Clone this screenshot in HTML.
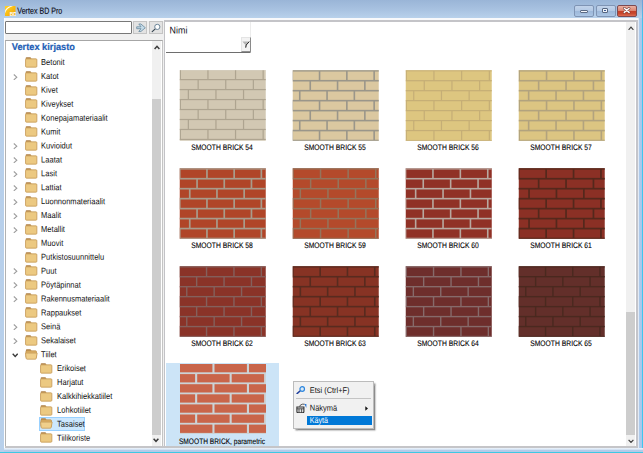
<!DOCTYPE html>
<html><head><meta charset="utf-8"><title>Vertex BD Pro</title>
<style>
html,body{margin:0;padding:0}
body{width:643px;height:453px;overflow:hidden;position:relative;background:#b4cdea;font-family:"Liberation Sans",sans-serif;color:#000}
div,svg,span{position:absolute;box-sizing:border-box}
.t{white-space:nowrap;transform-origin:0 50%;line-height:1}
.lbl{font-size:8px;white-space:nowrap;line-height:1;text-align:center;width:140px;color:#000;transform:matrix(.845,0.001,0,1,0,0);transform-origin:50% 50%;-webkit-text-stroke:.12px #000}
.tile{shape-rendering:auto}
</style></head><body>

<div style="left:0;top:0;width:643px;height:18px;background:linear-gradient(#9ab5d7,#a7c1e0 50%,#b8d1eb)"></div>
<div style="left:0;top:18px;width:4px;height:435px;background:#b8d0eb"></div>
<div style="left:638px;top:18px;width:5px;height:435px;background:linear-gradient(90deg,#e4ecf6 0,#dfe9f6 22%,#aecbec 28%,#a8c6ec 76%,#3ec6ee 82%)"></div>
<div style="left:641.8px;top:0;width:1.2px;height:24px;background:linear-gradient(#6f9fd6,#3ec6ee)"></div>
<div style="left:0;top:447.7px;width:643px;height:5.3px;background:linear-gradient(#e8f0f9 0,#e2ecf8 28%,#b4cdea 34%,#b6cae8 70%,#c6c8e2 78%,#3ec8e4 84%)"></div>
<div style="left:0;top:447.7px;width:3.7px;height:4px;background:#b8d0eb"></div>
<div style="left:3.7px;top:17.8px;width:634.6px;height:430px;background:#f0f0f0"></div>
<div style="left:3.7px;top:17.8px;width:634.6px;height:3.4px;background:#f8f9fb"></div>
<div style="left:636.2px;top:19.6px;width:2.2px;height:428.2px;background:#c4c5cb"></div>
<div style="left:4.8px;top:446px;width:633px;height:1.8px;background:#c5c5c8"></div>
<div style="left:3.7px;top:17.8px;width:1.2px;height:430px;background:#fff"></div>
<svg style="left:5px;top:5.5px" width="10.5" height="10.5" viewBox="0 0 21 21"><defs><linearGradient id="ig" x1="0" y1="0" x2="1" y2="1"><stop offset="0" stop-color="#ffd428"/><stop offset="1" stop-color="#f2a200"/></linearGradient></defs><rect width="21" height="21" fill="url(#ig)"/><path d="M0 15 Q3 3.5 16 0 L11.5 0 Q2 3 0 9.5 Z" fill="#fff" opacity=".92"/><text x="9.5" y="20" font-size="10" font-weight="bold" font-family="Liberation Sans, sans-serif" fill="#fff">BD</text></svg>
<span class="t" style="left:17px;top:6px;font-size:8.9px;transform:matrix(0.8,0.001,0,1,0.30,0.72);color:#0a0a14;-webkit-text-stroke:.12px #0a0a14">Vertex BD Pro</span>
<div style="left:574px;top:5px;width:19.5px;height:11.5px;border:1px solid #7f94b4;border-radius:2px;background:linear-gradient(#c2d3ea 0,#b3c9e5 48%,#9db8da 52%,#abc5e3)"></div>
<div style="left:580px;top:10px;width:7.5px;height:3px;background:#f4f6fa;border:.7px solid #5a6a84;border-radius:1px"></div>
<div style="left:596px;top:5px;width:19.5px;height:11.5px;border:1px solid #7f94b4;border-radius:2px;background:linear-gradient(#c2d3ea 0,#b3c9e5 48%,#9db8da 52%,#abc5e3)"></div>
<div style="left:602.1px;top:7.9px;width:6.2px;height:5.2px;background:#eef2f8;border:.8px solid #55657f;border-radius:1px"></div>
<div style="left:603.9px;top:9.7px;width:2.6px;height:1.6px;background:#3c5a96"></div>
<div style="left:617px;top:5px;width:20px;height:11.5px;border:1px solid #7d4a50;border-radius:2px;background:linear-gradient(#eab0a2 0,#dc8672 46%,#c4402a 54%,#c8482e 75%,#dc6c54)"></div>
<svg style="left:623.3px;top:7.4px" width="7.4" height="6.6" viewBox="0 0 7.4 6.6"><path d="M1.3 1.2 L6.1 5.4 M6.1 1.2 L1.3 5.4" stroke="#6a3430" stroke-width="2.5" stroke-linecap="round"/><path d="M1.3 1.2 L6.1 5.4 M6.1 1.2 L1.3 5.4" stroke="#fff" stroke-width="1.5" stroke-linecap="round"/></svg>
<div style="left:5px;top:21.2px;width:127px;height:12.6px;background:#fff;border:1px solid #787878;border-radius:1px"></div>
<div style="left:133.4px;top:21.2px;width:13.5px;height:12.6px;background:#e3e3e3;border:1px solid #c4c4c4"></div>
<div style="left:148.9px;top:21.2px;width:13.7px;height:12.6px;background:#e3e3e3;border:1px solid #c4c4c4"></div>
<svg style="left:135.5px;top:23px" width="11" height="10" viewBox="0 0 11 10"><path d="M0.7 3.8 H5 L2.8 1 H4.9 L9.3 4.75 L4.9 8.5 H2.8 L5 5.7 H0.7 Z" fill="#c6dcea" stroke="#6c8ca0" stroke-width="0.85" stroke-linejoin="round"/></svg>
<svg style="left:150.5px;top:22.5px" width="10.5" height="10" viewBox="0 0 10.5 10"><path d="M1.2 8.7 L4.3 5.8" stroke="#36444f" stroke-width="1.15" stroke-linecap="round"/><circle cx="6.3" cy="3.9" r="2.6" fill="#fff" stroke="#6a8498" stroke-width="1"/></svg>
<div class="tree" style="left:5px;top:40px;width:158.2px;height:406px;background:#fff;border:1px solid #a6a6a6;border-left-color:#b2b2b2;border-right:1.2px solid #c4c4c4;border-bottom:none;overflow:hidden">
<span class="t" style="left:5px;top:0px;font-size:9.7px;transform:matrix(0.953,0.001,0,1,0.80,0.94);color:#1d5eb6;font-weight:bold;-webkit-text-stroke:.2px #1d5eb6">Vertex kirjasto</span>
<svg class="fold" style="left:18.6px;top:15.70px" width="13" height="11" viewBox="0 0 13 11"><path d="M0.7 2.3 L0.7 1.1 Q0.7 0.3 1.7 0.3 L5 0.3 Q5.9 0.3 6.2 1.2 L6.6 2.3 Z" fill="#ad7f45"/><rect x="0.55" y="1.85" width="11.3" height="8.3" rx="0.9" fill="#ecc981" stroke="#c69c5a" stroke-width="0.85"/></svg>
<span class="t" style="left:35px;top:16px;font-size:8.6px;transform:matrix(0.875,0.001,0,1,0.10,0.97);color:#111;">Betonit</span>
<svg style="left:7px;top:32.62px" width="5" height="6.4" viewBox="0 0 5 6.4"><path d="M0.8 0.5 L3.8 3.2 L0.8 5.9" fill="none" stroke="#9c9c9c" stroke-width="1.1"/></svg>
<svg class="fold" style="left:18.6px;top:29.62px" width="13" height="11" viewBox="0 0 13 11"><path d="M0.7 2.3 L0.7 1.1 Q0.7 0.3 1.7 0.3 L5 0.3 Q5.9 0.3 6.2 1.2 L6.6 2.3 Z" fill="#ad7f45"/><rect x="0.55" y="1.85" width="11.3" height="8.3" rx="0.9" fill="#ecc981" stroke="#c69c5a" stroke-width="0.85"/></svg>
<span class="t" style="left:35px;top:30px;font-size:8.6px;transform:matrix(0.875,0.001,0,1,0.10,0.89);color:#111;">Katot</span>
<svg class="fold" style="left:18.6px;top:43.53px" width="13" height="11" viewBox="0 0 13 11"><path d="M0.7 2.3 L0.7 1.1 Q0.7 0.3 1.7 0.3 L5 0.3 Q5.9 0.3 6.2 1.2 L6.6 2.3 Z" fill="#ad7f45"/><rect x="0.55" y="1.85" width="11.3" height="8.3" rx="0.9" fill="#ecc981" stroke="#c69c5a" stroke-width="0.85"/></svg>
<span class="t" style="left:35px;top:44px;font-size:8.6px;transform:matrix(0.875,0.001,0,1,0.10,0.80);color:#111;">Kivet</span>
<svg class="fold" style="left:18.6px;top:57.44px" width="13" height="11" viewBox="0 0 13 11"><path d="M0.7 2.3 L0.7 1.1 Q0.7 0.3 1.7 0.3 L5 0.3 Q5.9 0.3 6.2 1.2 L6.6 2.3 Z" fill="#ad7f45"/><rect x="0.55" y="1.85" width="11.3" height="8.3" rx="0.9" fill="#ecc981" stroke="#c69c5a" stroke-width="0.85"/></svg>
<span class="t" style="left:35px;top:58px;font-size:8.6px;transform:matrix(0.875,0.001,0,1,0.10,0.72);color:#111;">Kiveykset</span>
<svg class="fold" style="left:18.6px;top:71.36px" width="13" height="11" viewBox="0 0 13 11"><path d="M0.7 2.3 L0.7 1.1 Q0.7 0.3 1.7 0.3 L5 0.3 Q5.9 0.3 6.2 1.2 L6.6 2.3 Z" fill="#ad7f45"/><rect x="0.55" y="1.85" width="11.3" height="8.3" rx="0.9" fill="#ecc981" stroke="#c69c5a" stroke-width="0.85"/></svg>
<span class="t" style="left:35px;top:72px;font-size:8.6px;transform:matrix(0.875,0.001,0,1,0.10,0.63);color:#111;">Konepajamateriaalit</span>
<svg class="fold" style="left:18.6px;top:85.28px" width="13" height="11" viewBox="0 0 13 11"><path d="M0.7 2.3 L0.7 1.1 Q0.7 0.3 1.7 0.3 L5 0.3 Q5.9 0.3 6.2 1.2 L6.6 2.3 Z" fill="#ad7f45"/><rect x="0.55" y="1.85" width="11.3" height="8.3" rx="0.9" fill="#ecc981" stroke="#c69c5a" stroke-width="0.85"/></svg>
<span class="t" style="left:35px;top:86px;font-size:8.6px;transform:matrix(0.875,0.001,0,1,0.10,0.55);color:#111;">Kumit</span>
<svg style="left:7px;top:102.19px" width="5" height="6.4" viewBox="0 0 5 6.4"><path d="M0.8 0.5 L3.8 3.2 L0.8 5.9" fill="none" stroke="#9c9c9c" stroke-width="1.1"/></svg>
<svg class="fold" style="left:18.6px;top:99.19px" width="13" height="11" viewBox="0 0 13 11"><path d="M0.7 2.3 L0.7 1.1 Q0.7 0.3 1.7 0.3 L5 0.3 Q5.9 0.3 6.2 1.2 L6.6 2.3 Z" fill="#ad7f45"/><rect x="0.55" y="1.85" width="11.3" height="8.3" rx="0.9" fill="#ecc981" stroke="#c69c5a" stroke-width="0.85"/></svg>
<span class="t" style="left:35px;top:100px;font-size:8.6px;transform:matrix(0.875,0.001,0,1,0.10,0.46);color:#111;">Kuvioidut</span>
<svg style="left:7px;top:116.10px" width="5" height="6.4" viewBox="0 0 5 6.4"><path d="M0.8 0.5 L3.8 3.2 L0.8 5.9" fill="none" stroke="#9c9c9c" stroke-width="1.1"/></svg>
<svg class="fold" style="left:18.6px;top:113.10px" width="13" height="11" viewBox="0 0 13 11"><path d="M0.7 2.3 L0.7 1.1 Q0.7 0.3 1.7 0.3 L5 0.3 Q5.9 0.3 6.2 1.2 L6.6 2.3 Z" fill="#ad7f45"/><rect x="0.55" y="1.85" width="11.3" height="8.3" rx="0.9" fill="#ecc981" stroke="#c69c5a" stroke-width="0.85"/></svg>
<span class="t" style="left:35px;top:114px;font-size:8.6px;transform:matrix(0.875,0.001,0,1,0.10,0.38);color:#111;">Laatat</span>
<svg style="left:7px;top:130.02px" width="5" height="6.4" viewBox="0 0 5 6.4"><path d="M0.8 0.5 L3.8 3.2 L0.8 5.9" fill="none" stroke="#9c9c9c" stroke-width="1.1"/></svg>
<svg class="fold" style="left:18.6px;top:127.02px" width="13" height="11" viewBox="0 0 13 11"><path d="M0.7 2.3 L0.7 1.1 Q0.7 0.3 1.7 0.3 L5 0.3 Q5.9 0.3 6.2 1.2 L6.6 2.3 Z" fill="#ad7f45"/><rect x="0.55" y="1.85" width="11.3" height="8.3" rx="0.9" fill="#ecc981" stroke="#c69c5a" stroke-width="0.85"/></svg>
<span class="t" style="left:35px;top:128px;font-size:8.6px;transform:matrix(0.875,0.001,0,1,0.10,0.29);color:#111;">Lasit</span>
<svg style="left:7px;top:143.93px" width="5" height="6.4" viewBox="0 0 5 6.4"><path d="M0.8 0.5 L3.8 3.2 L0.8 5.9" fill="none" stroke="#9c9c9c" stroke-width="1.1"/></svg>
<svg class="fold" style="left:18.6px;top:140.93px" width="13" height="11" viewBox="0 0 13 11"><path d="M0.7 2.3 L0.7 1.1 Q0.7 0.3 1.7 0.3 L5 0.3 Q5.9 0.3 6.2 1.2 L6.6 2.3 Z" fill="#ad7f45"/><rect x="0.55" y="1.85" width="11.3" height="8.3" rx="0.9" fill="#ecc981" stroke="#c69c5a" stroke-width="0.85"/></svg>
<span class="t" style="left:35px;top:142px;font-size:8.6px;transform:matrix(0.875,0.001,0,1,0.10,0.21);color:#111;">Lattiat</span>
<svg style="left:7px;top:157.85px" width="5" height="6.4" viewBox="0 0 5 6.4"><path d="M0.8 0.5 L3.8 3.2 L0.8 5.9" fill="none" stroke="#9c9c9c" stroke-width="1.1"/></svg>
<svg class="fold" style="left:18.6px;top:154.85px" width="13" height="11" viewBox="0 0 13 11"><path d="M0.7 2.3 L0.7 1.1 Q0.7 0.3 1.7 0.3 L5 0.3 Q5.9 0.3 6.2 1.2 L6.6 2.3 Z" fill="#ad7f45"/><rect x="0.55" y="1.85" width="11.3" height="8.3" rx="0.9" fill="#ecc981" stroke="#c69c5a" stroke-width="0.85"/></svg>
<span class="t" style="left:35px;top:156px;font-size:8.6px;transform:matrix(0.875,0.001,0,1,0.10,0.12);color:#111;">Luonnonmateriaalit</span>
<svg style="left:7px;top:171.77px" width="5" height="6.4" viewBox="0 0 5 6.4"><path d="M0.8 0.5 L3.8 3.2 L0.8 5.9" fill="none" stroke="#9c9c9c" stroke-width="1.1"/></svg>
<svg class="fold" style="left:18.6px;top:168.77px" width="13" height="11" viewBox="0 0 13 11"><path d="M0.7 2.3 L0.7 1.1 Q0.7 0.3 1.7 0.3 L5 0.3 Q5.9 0.3 6.2 1.2 L6.6 2.3 Z" fill="#ad7f45"/><rect x="0.55" y="1.85" width="11.3" height="8.3" rx="0.9" fill="#ecc981" stroke="#c69c5a" stroke-width="0.85"/></svg>
<span class="t" style="left:35px;top:170px;font-size:8.6px;transform:matrix(0.875,0.001,0,1,0.10,0.04);color:#111;">Maalit</span>
<svg style="left:7px;top:185.68px" width="5" height="6.4" viewBox="0 0 5 6.4"><path d="M0.8 0.5 L3.8 3.2 L0.8 5.9" fill="none" stroke="#9c9c9c" stroke-width="1.1"/></svg>
<svg class="fold" style="left:18.6px;top:182.68px" width="13" height="11" viewBox="0 0 13 11"><path d="M0.7 2.3 L0.7 1.1 Q0.7 0.3 1.7 0.3 L5 0.3 Q5.9 0.3 6.2 1.2 L6.6 2.3 Z" fill="#ad7f45"/><rect x="0.55" y="1.85" width="11.3" height="8.3" rx="0.9" fill="#ecc981" stroke="#c69c5a" stroke-width="0.85"/></svg>
<span class="t" style="left:35px;top:183px;font-size:8.6px;transform:matrix(0.875,0.001,0,1,0.10,0.95);color:#111;">Metallit</span>
<svg class="fold" style="left:18.6px;top:196.59px" width="13" height="11" viewBox="0 0 13 11"><path d="M0.7 2.3 L0.7 1.1 Q0.7 0.3 1.7 0.3 L5 0.3 Q5.9 0.3 6.2 1.2 L6.6 2.3 Z" fill="#ad7f45"/><rect x="0.55" y="1.85" width="11.3" height="8.3" rx="0.9" fill="#ecc981" stroke="#c69c5a" stroke-width="0.85"/></svg>
<span class="t" style="left:35px;top:197px;font-size:8.6px;transform:matrix(0.875,0.001,0,1,0.10,0.87);color:#111;">Muovit</span>
<svg class="fold" style="left:18.6px;top:210.51px" width="13" height="11" viewBox="0 0 13 11"><path d="M0.7 2.3 L0.7 1.1 Q0.7 0.3 1.7 0.3 L5 0.3 Q5.9 0.3 6.2 1.2 L6.6 2.3 Z" fill="#ad7f45"/><rect x="0.55" y="1.85" width="11.3" height="8.3" rx="0.9" fill="#ecc981" stroke="#c69c5a" stroke-width="0.85"/></svg>
<span class="t" style="left:35px;top:211px;font-size:8.6px;transform:matrix(0.875,0.001,0,1,0.10,0.78);color:#111;">Putkistosuunnittelu</span>
<svg style="left:7px;top:227.42px" width="5" height="6.4" viewBox="0 0 5 6.4"><path d="M0.8 0.5 L3.8 3.2 L0.8 5.9" fill="none" stroke="#9c9c9c" stroke-width="1.1"/></svg>
<svg class="fold" style="left:18.6px;top:224.42px" width="13" height="11" viewBox="0 0 13 11"><path d="M0.7 2.3 L0.7 1.1 Q0.7 0.3 1.7 0.3 L5 0.3 Q5.9 0.3 6.2 1.2 L6.6 2.3 Z" fill="#ad7f45"/><rect x="0.55" y="1.85" width="11.3" height="8.3" rx="0.9" fill="#ecc981" stroke="#c69c5a" stroke-width="0.85"/></svg>
<span class="t" style="left:35px;top:225px;font-size:8.6px;transform:matrix(0.875,0.001,0,1,0.10,0.70);color:#111;">Puut</span>
<svg style="left:7px;top:241.34px" width="5" height="6.4" viewBox="0 0 5 6.4"><path d="M0.8 0.5 L3.8 3.2 L0.8 5.9" fill="none" stroke="#9c9c9c" stroke-width="1.1"/></svg>
<svg class="fold" style="left:18.6px;top:238.34px" width="13" height="11" viewBox="0 0 13 11"><path d="M0.7 2.3 L0.7 1.1 Q0.7 0.3 1.7 0.3 L5 0.3 Q5.9 0.3 6.2 1.2 L6.6 2.3 Z" fill="#ad7f45"/><rect x="0.55" y="1.85" width="11.3" height="8.3" rx="0.9" fill="#ecc981" stroke="#c69c5a" stroke-width="0.85"/></svg>
<span class="t" style="left:35px;top:239px;font-size:8.6px;transform:matrix(0.875,0.001,0,1,0.10,0.61);color:#111;">Pöytäpinnat</span>
<svg style="left:7px;top:255.25px" width="5" height="6.4" viewBox="0 0 5 6.4"><path d="M0.8 0.5 L3.8 3.2 L0.8 5.9" fill="none" stroke="#9c9c9c" stroke-width="1.1"/></svg>
<svg class="fold" style="left:18.6px;top:252.25px" width="13" height="11" viewBox="0 0 13 11"><path d="M0.7 2.3 L0.7 1.1 Q0.7 0.3 1.7 0.3 L5 0.3 Q5.9 0.3 6.2 1.2 L6.6 2.3 Z" fill="#ad7f45"/><rect x="0.55" y="1.85" width="11.3" height="8.3" rx="0.9" fill="#ecc981" stroke="#c69c5a" stroke-width="0.85"/></svg>
<span class="t" style="left:35px;top:253px;font-size:8.6px;transform:matrix(0.875,0.001,0,1,0.10,0.53);color:#111;">Rakennusmateriaalit</span>
<svg class="fold" style="left:18.6px;top:266.17px" width="13" height="11" viewBox="0 0 13 11"><path d="M0.7 2.3 L0.7 1.1 Q0.7 0.3 1.7 0.3 L5 0.3 Q5.9 0.3 6.2 1.2 L6.6 2.3 Z" fill="#ad7f45"/><rect x="0.55" y="1.85" width="11.3" height="8.3" rx="0.9" fill="#ecc981" stroke="#c69c5a" stroke-width="0.85"/></svg>
<span class="t" style="left:35px;top:267px;font-size:8.6px;transform:matrix(0.875,0.001,0,1,0.10,0.44);color:#111;">Rappaukset</span>
<svg style="left:7px;top:283.08px" width="5" height="6.4" viewBox="0 0 5 6.4"><path d="M0.8 0.5 L3.8 3.2 L0.8 5.9" fill="none" stroke="#9c9c9c" stroke-width="1.1"/></svg>
<svg class="fold" style="left:18.6px;top:280.08px" width="13" height="11" viewBox="0 0 13 11"><path d="M0.7 2.3 L0.7 1.1 Q0.7 0.3 1.7 0.3 L5 0.3 Q5.9 0.3 6.2 1.2 L6.6 2.3 Z" fill="#ad7f45"/><rect x="0.55" y="1.85" width="11.3" height="8.3" rx="0.9" fill="#ecc981" stroke="#c69c5a" stroke-width="0.85"/></svg>
<span class="t" style="left:35px;top:281px;font-size:8.6px;transform:matrix(0.875,0.001,0,1,0.10,0.36);color:#111;">Seinä</span>
<svg style="left:7px;top:297.00px" width="5" height="6.4" viewBox="0 0 5 6.4"><path d="M0.8 0.5 L3.8 3.2 L0.8 5.9" fill="none" stroke="#9c9c9c" stroke-width="1.1"/></svg>
<svg class="fold" style="left:18.6px;top:294.00px" width="13" height="11" viewBox="0 0 13 11"><path d="M0.7 2.3 L0.7 1.1 Q0.7 0.3 1.7 0.3 L5 0.3 Q5.9 0.3 6.2 1.2 L6.6 2.3 Z" fill="#ad7f45"/><rect x="0.55" y="1.85" width="11.3" height="8.3" rx="0.9" fill="#ecc981" stroke="#c69c5a" stroke-width="0.85"/></svg>
<span class="t" style="left:35px;top:295px;font-size:8.6px;transform:matrix(0.875,0.001,0,1,0.10,0.27);color:#111;">Sekalaiset</span>
<svg style="left:6px;top:311.51px" width="6.4" height="5" viewBox="0 0 6.4 5"><path d="M0.7 0.8 L3.2 3.5 L5.7 0.8" fill="none" stroke="#383838" stroke-width="1.35"/></svg>
<svg class="fold" style="left:18.6px;top:307.91px" width="13" height="11" viewBox="0 0 13 11"><path d="M0.9 2.3 L0.9 1.1 Q0.9 0.3 1.9 0.3 L5 0.3 Q5.9 0.3 6.2 1.2 L6.6 2.3 Z" fill="#ad7f45"/><rect x="0.9" y="1.85" width="10.6" height="7" rx="0.9" fill="#dcae62" stroke="#c09452" stroke-width="0.8"/><path d="M0.5 4.1 H12.2 L11.2 9.4 Q11.1 10.2 10.3 10.2 H2.1 Q1.3 10.2 1.2 9.4 Z" fill="#f0cf8a" stroke="#c69c5a" stroke-width="0.8" stroke-linejoin="round"/></svg>
<span class="t" style="left:35px;top:309px;font-size:8.6px;transform:matrix(0.875,0.001,0,1,0.10,0.19);color:#111;">Tiilet</span>
<svg class="fold" style="left:34.0px;top:321.83px" width="13" height="11" viewBox="0 0 13 11"><path d="M0.7 2.3 L0.7 1.1 Q0.7 0.3 1.7 0.3 L5 0.3 Q5.9 0.3 6.2 1.2 L6.6 2.3 Z" fill="#ad7f45"/><rect x="0.55" y="1.85" width="11.3" height="8.3" rx="0.9" fill="#ecc981" stroke="#c69c5a" stroke-width="0.85"/></svg>
<span class="t" style="left:51px;top:323px;font-size:8.6px;transform:matrix(0.875,0.001,0,1,0.10,0.10);color:#111;">Erikoiset</span>
<svg class="fold" style="left:34.0px;top:335.74px" width="13" height="11" viewBox="0 0 13 11"><path d="M0.7 2.3 L0.7 1.1 Q0.7 0.3 1.7 0.3 L5 0.3 Q5.9 0.3 6.2 1.2 L6.6 2.3 Z" fill="#ad7f45"/><rect x="0.55" y="1.85" width="11.3" height="8.3" rx="0.9" fill="#ecc981" stroke="#c69c5a" stroke-width="0.85"/></svg>
<span class="t" style="left:51px;top:337px;font-size:8.6px;transform:matrix(0.875,0.001,0,1,0.10,0.02);color:#111;">Harjatut</span>
<svg class="fold" style="left:34.0px;top:349.66px" width="13" height="11" viewBox="0 0 13 11"><path d="M0.7 2.3 L0.7 1.1 Q0.7 0.3 1.7 0.3 L5 0.3 Q5.9 0.3 6.2 1.2 L6.6 2.3 Z" fill="#ad7f45"/><rect x="0.55" y="1.85" width="11.3" height="8.3" rx="0.9" fill="#ecc981" stroke="#c69c5a" stroke-width="0.85"/></svg>
<span class="t" style="left:51px;top:350px;font-size:8.6px;transform:matrix(0.875,0.001,0,1,0.10,0.93);color:#111;">Kalkkihiekkatiilet</span>
<svg class="fold" style="left:34.0px;top:363.57px" width="13" height="11" viewBox="0 0 13 11"><path d="M0.7 2.3 L0.7 1.1 Q0.7 0.3 1.7 0.3 L5 0.3 Q5.9 0.3 6.2 1.2 L6.6 2.3 Z" fill="#ad7f45"/><rect x="0.55" y="1.85" width="11.3" height="8.3" rx="0.9" fill="#ecc981" stroke="#c69c5a" stroke-width="0.85"/></svg>
<span class="t" style="left:51px;top:364px;font-size:8.6px;transform:matrix(0.875,0.001,0,1,0.10,0.85);color:#111;">Lohkotiilet</span>
<div style="left:32.8px;top:376.09px;width:46.4px;height:13.6px;background:#cce8ff;border:.6px solid #99d1ff"></div>
<svg class="fold" style="left:34.0px;top:377.49px" width="13" height="11" viewBox="0 0 13 11"><path d="M0.9 2.3 L0.9 1.1 Q0.9 0.3 1.9 0.3 L5 0.3 Q5.9 0.3 6.2 1.2 L6.6 2.3 Z" fill="#ad7f45"/><rect x="0.9" y="1.85" width="10.6" height="7" rx="0.9" fill="#dcae62" stroke="#c09452" stroke-width="0.8"/><path d="M0.5 4.1 H12.2 L11.2 9.4 Q11.1 10.2 10.3 10.2 H2.1 Q1.3 10.2 1.2 9.4 Z" fill="#f0cf8a" stroke="#c69c5a" stroke-width="0.8" stroke-linejoin="round"/></svg>
<span class="t" style="left:51px;top:378px;font-size:8.6px;transform:matrix(0.875,0.001,0,1,0.10,0.76);color:#111;">Tasaiset</span>
<svg class="fold" style="left:34.0px;top:391.40px" width="13" height="11" viewBox="0 0 13 11"><path d="M0.7 2.3 L0.7 1.1 Q0.7 0.3 1.7 0.3 L5 0.3 Q5.9 0.3 6.2 1.2 L6.6 2.3 Z" fill="#ad7f45"/><rect x="0.55" y="1.85" width="11.3" height="8.3" rx="0.9" fill="#ecc981" stroke="#c69c5a" stroke-width="0.85"/></svg>
<span class="t" style="left:51px;top:392px;font-size:8.6px;transform:matrix(0.875,0.001,0,1,0.10,0.68);color:#111;">Tiilikoriste</span>
<div style="left:146px;top:0;width:8.8px;height:405px;background:#f0f0f0"></div>
<div style="left:146px;top:57.5px;width:8.8px;height:336.3px;background:#cdcdcd"></div>
<svg style="left:147.8px;top:4.3px" width="6" height="4.5" viewBox="0 0 6 4.5"><path d="M0.6 3.9 L3 1.3 L5.4 3.9" fill="none" stroke="#3a3a3a" stroke-width="1.5"/></svg>
<svg style="left:147.4px;top:397.2px" width="6" height="4.5" viewBox="0 0 6 4.5"><path d="M0.6 0.7 L3 3.3 L5.4 0.7" fill="none" stroke="#3a3a3a" stroke-width="1.5"/></svg>
</div>
<div style="left:164.3px;top:19.7px;width:472px;height:426.3px;background:#fff;border-left:1.5px solid #c2c2c6;border-top:2px solid #c4c4c8"></div>
<div style="left:165.8px;top:21.7px;width:85.7px;height:30.9px;background:#fff;border-bottom:1.2px solid #6e6e6e;border-right:1px solid #ececec"></div>
<div style="left:240.9px;top:37.3px;width:10.6px;height:15.2px;background:#f3f3f3;border-right:1px solid #8a8a8a;border-bottom:1px solid #909090;border-left:.5px solid #e4e4e4;border-top:.5px solid #e4e4e4"></div>
<svg style="left:242.4px;top:41px" width="8" height="7.5" viewBox="0 0 8 7.5"><path d="M0.4 0.5 H7.4 L4.4 3.9 V6.2 L3.4 6.9 V3.9 Z" fill="#b4b4b4"/><path d="M7.3 0.6 L4.2 4 L3.7 6.6" fill="none" stroke="#2c2c2c" stroke-width="1"/></svg>
<span class="t" style="left:169px;top:25px;font-size:9.7px;transform:matrix(0.917,0.001,0,1,0.60,0.44);color:#10101c;">Nimi</span>
<div style="left:165.8px;top:362.5px;width:112.8px;height:83.5px;background:#cce4f7"></div>
<svg class="tile" style="left:179.40px;top:70px" width="88" height="72" viewBox="0 0 88 72">
<clipPath id="c0"><rect x="0.75" y="0.25" width="86" height="70.5"/></clipPath>
<g clip-path="url(#c0)"><g transform="translate(0.75,0.25)">
<rect x="-2" y="-2" width="90" height="74.5" fill="#d2c8b3"/>
<g fill="#aea490" style="filter:blur(0.5px)">
<rect x="-2" y="-1.20" width="90" height="1.2"/>
<rect x="-2" y="8.77" width="90" height="1.2"/>
<rect x="-2" y="18.74" width="90" height="1.2"/>
<rect x="-2" y="28.71" width="90" height="1.2"/>
<rect x="-2" y="38.68" width="90" height="1.2"/>
<rect x="-2" y="48.65" width="90" height="1.2"/>
<rect x="-2" y="58.62" width="90" height="1.2"/>
<rect x="-2" y="68.59" width="90" height="1.2"/>
<rect x="-0.00" y="-0.60" width="1.2" height="9.97"/>
<rect x="27.60" y="-0.60" width="1.2" height="9.97"/>
<rect x="55.20" y="-0.60" width="1.2" height="9.97"/>
<rect x="82.80" y="-0.60" width="1.2" height="9.97"/>
<rect x="17.80" y="9.37" width="1.2" height="9.97"/>
<rect x="45.40" y="9.37" width="1.2" height="9.97"/>
<rect x="73.00" y="9.37" width="1.2" height="9.97"/>
<rect x="8.00" y="19.34" width="1.2" height="9.97"/>
<rect x="35.60" y="19.34" width="1.2" height="9.97"/>
<rect x="63.20" y="19.34" width="1.2" height="9.97"/>
<rect x="-0.00" y="29.31" width="1.2" height="9.97"/>
<rect x="27.60" y="29.31" width="1.2" height="9.97"/>
<rect x="55.20" y="29.31" width="1.2" height="9.97"/>
<rect x="82.80" y="29.31" width="1.2" height="9.97"/>
<rect x="17.80" y="39.28" width="1.2" height="9.97"/>
<rect x="45.40" y="39.28" width="1.2" height="9.97"/>
<rect x="73.00" y="39.28" width="1.2" height="9.97"/>
<rect x="8.00" y="49.25" width="1.2" height="9.97"/>
<rect x="35.60" y="49.25" width="1.2" height="9.97"/>
<rect x="63.20" y="49.25" width="1.2" height="9.97"/>
<rect x="-0.00" y="59.22" width="1.2" height="9.97"/>
<rect x="27.60" y="59.22" width="1.2" height="9.97"/>
<rect x="55.20" y="59.22" width="1.2" height="9.97"/>
<rect x="82.80" y="59.22" width="1.2" height="9.97"/>
</g></g></g></svg>
<div class="lbl" style="left:152px;top:143.73px">SMOOTH BRICK 54</div>
<svg class="tile" style="left:292.40px;top:70px" width="88" height="72" viewBox="0 0 88 72">
<clipPath id="c1"><rect x="0.75" y="0.25" width="86" height="70.5"/></clipPath>
<g clip-path="url(#c1)"><g transform="translate(0.75,0.25)">
<rect x="-2" y="-2" width="90" height="74.5" fill="#dbc8a0"/>
<g fill="#9a968a" style="filter:blur(0.35px)">
<rect x="-2" y="-0.30" width="90" height="1.6"/>
<rect x="-2" y="9.67" width="90" height="1.6"/>
<rect x="-2" y="19.64" width="90" height="1.6"/>
<rect x="-2" y="29.61" width="90" height="1.6"/>
<rect x="-2" y="39.58" width="90" height="1.6"/>
<rect x="-2" y="49.55" width="90" height="1.6"/>
<rect x="-2" y="59.52" width="90" height="1.6"/>
<rect x="-2" y="69.49" width="90" height="1.6"/>
<rect x="-1.30" y="0.50" width="1.6" height="9.97"/>
<rect x="26.00" y="0.50" width="1.6" height="9.97"/>
<rect x="53.30" y="0.50" width="1.6" height="9.97"/>
<rect x="80.60" y="0.50" width="1.6" height="9.97"/>
<rect x="16.70" y="10.47" width="1.6" height="9.97"/>
<rect x="44.00" y="10.47" width="1.6" height="9.97"/>
<rect x="71.30" y="10.47" width="1.6" height="9.97"/>
<rect x="6.20" y="20.44" width="1.6" height="9.97"/>
<rect x="33.50" y="20.44" width="1.6" height="9.97"/>
<rect x="60.80" y="20.44" width="1.6" height="9.97"/>
<rect x="-1.30" y="30.41" width="1.6" height="9.97"/>
<rect x="26.00" y="30.41" width="1.6" height="9.97"/>
<rect x="53.30" y="30.41" width="1.6" height="9.97"/>
<rect x="80.60" y="30.41" width="1.6" height="9.97"/>
<rect x="16.70" y="40.38" width="1.6" height="9.97"/>
<rect x="44.00" y="40.38" width="1.6" height="9.97"/>
<rect x="71.30" y="40.38" width="1.6" height="9.97"/>
<rect x="6.20" y="50.35" width="1.6" height="9.97"/>
<rect x="33.50" y="50.35" width="1.6" height="9.97"/>
<rect x="60.80" y="50.35" width="1.6" height="9.97"/>
<rect x="-1.30" y="60.32" width="1.6" height="9.97"/>
<rect x="26.00" y="60.32" width="1.6" height="9.97"/>
<rect x="53.30" y="60.32" width="1.6" height="9.97"/>
<rect x="80.60" y="60.32" width="1.6" height="9.97"/>
</g></g></g></svg>
<div class="lbl" style="left:265px;top:143.73px">SMOOTH BRICK 55</div>
<svg class="tile" style="left:405.40px;top:70px" width="88" height="72" viewBox="0 0 88 72">
<clipPath id="c2"><rect x="0.75" y="0.25" width="86" height="70.5"/></clipPath>
<g clip-path="url(#c2)"><g transform="translate(0.75,0.25)">
<rect x="-2" y="-2" width="90" height="74.5" fill="#ddc680"/>
<g fill="#c5ae76" style="filter:blur(0.5px)">
<rect x="-2" y="-0.10" width="90" height="1.2"/>
<rect x="-2" y="9.87" width="90" height="1.2"/>
<rect x="-2" y="19.84" width="90" height="1.2"/>
<rect x="-2" y="29.81" width="90" height="1.2"/>
<rect x="-2" y="39.78" width="90" height="1.2"/>
<rect x="-2" y="49.75" width="90" height="1.2"/>
<rect x="-2" y="59.72" width="90" height="1.2"/>
<rect x="-2" y="69.69" width="90" height="1.2"/>
<rect x="-0.10" y="0.50" width="1.2" height="9.97"/>
<rect x="27.60" y="0.50" width="1.2" height="9.97"/>
<rect x="55.30" y="0.50" width="1.2" height="9.97"/>
<rect x="83.00" y="0.50" width="1.2" height="9.97"/>
<rect x="17.90" y="10.47" width="1.2" height="9.97"/>
<rect x="45.60" y="10.47" width="1.2" height="9.97"/>
<rect x="73.30" y="10.47" width="1.2" height="9.97"/>
<rect x="7.40" y="20.44" width="1.2" height="9.97"/>
<rect x="35.10" y="20.44" width="1.2" height="9.97"/>
<rect x="62.80" y="20.44" width="1.2" height="9.97"/>
<rect x="-0.10" y="30.41" width="1.2" height="9.97"/>
<rect x="27.60" y="30.41" width="1.2" height="9.97"/>
<rect x="55.30" y="30.41" width="1.2" height="9.97"/>
<rect x="83.00" y="30.41" width="1.2" height="9.97"/>
<rect x="17.90" y="40.38" width="1.2" height="9.97"/>
<rect x="45.60" y="40.38" width="1.2" height="9.97"/>
<rect x="73.30" y="40.38" width="1.2" height="9.97"/>
<rect x="7.40" y="50.35" width="1.2" height="9.97"/>
<rect x="35.10" y="50.35" width="1.2" height="9.97"/>
<rect x="62.80" y="50.35" width="1.2" height="9.97"/>
<rect x="-0.10" y="60.32" width="1.2" height="9.97"/>
<rect x="27.60" y="60.32" width="1.2" height="9.97"/>
<rect x="55.30" y="60.32" width="1.2" height="9.97"/>
<rect x="83.00" y="60.32" width="1.2" height="9.97"/>
</g></g></g></svg>
<div class="lbl" style="left:378px;top:143.73px">SMOOTH BRICK 56</div>
<svg class="tile" style="left:518.40px;top:70px" width="88" height="72" viewBox="0 0 88 72">
<clipPath id="c3"><rect x="0.75" y="0.25" width="86" height="70.5"/></clipPath>
<g clip-path="url(#c3)"><g transform="translate(0.75,0.25)">
<rect x="-2" y="-2" width="90" height="74.5" fill="#dcc582"/>
<g fill="#b2a37e" style="filter:blur(0.35px)">
<rect x="-2" y="-0.30" width="90" height="1.6"/>
<rect x="-2" y="9.67" width="90" height="1.6"/>
<rect x="-2" y="19.64" width="90" height="1.6"/>
<rect x="-2" y="29.61" width="90" height="1.6"/>
<rect x="-2" y="39.58" width="90" height="1.6"/>
<rect x="-2" y="49.55" width="90" height="1.6"/>
<rect x="-2" y="59.52" width="90" height="1.6"/>
<rect x="-2" y="69.49" width="90" height="1.6"/>
<rect x="-0.40" y="0.50" width="1.6" height="9.97"/>
<rect x="27.00" y="0.50" width="1.6" height="9.97"/>
<rect x="54.40" y="0.50" width="1.6" height="9.97"/>
<rect x="81.80" y="0.50" width="1.6" height="9.97"/>
<rect x="19.10" y="10.47" width="1.6" height="9.97"/>
<rect x="46.50" y="10.47" width="1.6" height="9.97"/>
<rect x="73.90" y="10.47" width="1.6" height="9.97"/>
<rect x="9.10" y="20.44" width="1.6" height="9.97"/>
<rect x="36.50" y="20.44" width="1.6" height="9.97"/>
<rect x="63.90" y="20.44" width="1.6" height="9.97"/>
<rect x="-0.40" y="30.41" width="1.6" height="9.97"/>
<rect x="27.00" y="30.41" width="1.6" height="9.97"/>
<rect x="54.40" y="30.41" width="1.6" height="9.97"/>
<rect x="81.80" y="30.41" width="1.6" height="9.97"/>
<rect x="19.10" y="40.38" width="1.6" height="9.97"/>
<rect x="46.50" y="40.38" width="1.6" height="9.97"/>
<rect x="73.90" y="40.38" width="1.6" height="9.97"/>
<rect x="9.10" y="50.35" width="1.6" height="9.97"/>
<rect x="36.50" y="50.35" width="1.6" height="9.97"/>
<rect x="63.90" y="50.35" width="1.6" height="9.97"/>
<rect x="-0.40" y="60.32" width="1.6" height="9.97"/>
<rect x="27.00" y="60.32" width="1.6" height="9.97"/>
<rect x="54.40" y="60.32" width="1.6" height="9.97"/>
<rect x="81.80" y="60.32" width="1.6" height="9.97"/>
</g></g></g></svg>
<div class="lbl" style="left:491px;top:143.73px">SMOOTH BRICK 57</div>
<svg class="tile" style="left:179.40px;top:168px" width="88" height="72" viewBox="0 0 88 72">
<clipPath id="c4"><rect x="0.75" y="0.25" width="86" height="70.5"/></clipPath>
<g clip-path="url(#c4)"><g transform="translate(0.75,0.25)">
<rect x="-2" y="-2" width="90" height="74.5" fill="#b04528"/>
<g fill="#a89c8c" style="filter:blur(0.35px)">
<rect x="-2" y="-0.35" width="90" height="1.7"/>
<rect x="-2" y="9.62" width="90" height="1.7"/>
<rect x="-2" y="19.59" width="90" height="1.7"/>
<rect x="-2" y="29.56" width="90" height="1.7"/>
<rect x="-2" y="39.53" width="90" height="1.7"/>
<rect x="-2" y="49.50" width="90" height="1.7"/>
<rect x="-2" y="59.47" width="90" height="1.7"/>
<rect x="-2" y="69.44" width="90" height="1.7"/>
<rect x="-0.85" y="0.50" width="1.7" height="9.97"/>
<rect x="26.35" y="0.50" width="1.7" height="9.97"/>
<rect x="53.55" y="0.50" width="1.7" height="9.97"/>
<rect x="80.75" y="0.50" width="1.7" height="9.97"/>
<rect x="16.45" y="10.47" width="1.7" height="9.97"/>
<rect x="43.65" y="10.47" width="1.7" height="9.97"/>
<rect x="70.85" y="10.47" width="1.7" height="9.97"/>
<rect x="9.15" y="20.44" width="1.7" height="9.97"/>
<rect x="36.35" y="20.44" width="1.7" height="9.97"/>
<rect x="63.55" y="20.44" width="1.7" height="9.97"/>
<rect x="-0.85" y="30.41" width="1.7" height="9.97"/>
<rect x="26.35" y="30.41" width="1.7" height="9.97"/>
<rect x="53.55" y="30.41" width="1.7" height="9.97"/>
<rect x="80.75" y="30.41" width="1.7" height="9.97"/>
<rect x="16.45" y="40.38" width="1.7" height="9.97"/>
<rect x="43.65" y="40.38" width="1.7" height="9.97"/>
<rect x="70.85" y="40.38" width="1.7" height="9.97"/>
<rect x="9.15" y="50.35" width="1.7" height="9.97"/>
<rect x="36.35" y="50.35" width="1.7" height="9.97"/>
<rect x="63.55" y="50.35" width="1.7" height="9.97"/>
<rect x="-0.85" y="60.32" width="1.7" height="9.97"/>
<rect x="26.35" y="60.32" width="1.7" height="9.97"/>
<rect x="53.55" y="60.32" width="1.7" height="9.97"/>
<rect x="80.75" y="60.32" width="1.7" height="9.97"/>
</g></g></g></svg>
<div class="lbl" style="left:152px;top:241.73px">SMOOTH BRICK 58</div>
<svg class="tile" style="left:292.40px;top:168px" width="88" height="72" viewBox="0 0 88 72">
<clipPath id="c5"><rect x="0.75" y="0.25" width="86" height="70.5"/></clipPath>
<g clip-path="url(#c5)"><g transform="translate(0.75,0.25)">
<rect x="-2" y="-2" width="90" height="74.5" fill="#b44a2b"/>
<g fill="#94745c" style="filter:blur(0.35px)">
<rect x="-2" y="-0.25" width="90" height="1.5"/>
<rect x="-2" y="9.72" width="90" height="1.5"/>
<rect x="-2" y="19.69" width="90" height="1.5"/>
<rect x="-2" y="29.66" width="90" height="1.5"/>
<rect x="-2" y="39.63" width="90" height="1.5"/>
<rect x="-2" y="49.60" width="90" height="1.5"/>
<rect x="-2" y="59.57" width="90" height="1.5"/>
<rect x="-2" y="69.54" width="90" height="1.5"/>
<rect x="-0.55" y="0.50" width="1.5" height="9.97"/>
<rect x="27.05" y="0.50" width="1.5" height="9.97"/>
<rect x="54.65" y="0.50" width="1.5" height="9.97"/>
<rect x="82.25" y="0.50" width="1.5" height="9.97"/>
<rect x="17.15" y="10.47" width="1.5" height="9.97"/>
<rect x="44.75" y="10.47" width="1.5" height="9.97"/>
<rect x="72.35" y="10.47" width="1.5" height="9.97"/>
<rect x="6.85" y="20.44" width="1.5" height="9.97"/>
<rect x="34.45" y="20.44" width="1.5" height="9.97"/>
<rect x="62.05" y="20.44" width="1.5" height="9.97"/>
<rect x="-0.55" y="30.41" width="1.5" height="9.97"/>
<rect x="27.05" y="30.41" width="1.5" height="9.97"/>
<rect x="54.65" y="30.41" width="1.5" height="9.97"/>
<rect x="82.25" y="30.41" width="1.5" height="9.97"/>
<rect x="17.15" y="40.38" width="1.5" height="9.97"/>
<rect x="44.75" y="40.38" width="1.5" height="9.97"/>
<rect x="72.35" y="40.38" width="1.5" height="9.97"/>
<rect x="6.85" y="50.35" width="1.5" height="9.97"/>
<rect x="34.45" y="50.35" width="1.5" height="9.97"/>
<rect x="62.05" y="50.35" width="1.5" height="9.97"/>
<rect x="-0.55" y="60.32" width="1.5" height="9.97"/>
<rect x="27.05" y="60.32" width="1.5" height="9.97"/>
<rect x="54.65" y="60.32" width="1.5" height="9.97"/>
<rect x="82.25" y="60.32" width="1.5" height="9.97"/>
</g></g></g></svg>
<div class="lbl" style="left:265px;top:241.73px">SMOOTH BRICK 59</div>
<svg class="tile" style="left:405.40px;top:168px" width="88" height="72" viewBox="0 0 88 72">
<clipPath id="c6"><rect x="0.75" y="0.25" width="86" height="70.5"/></clipPath>
<g clip-path="url(#c6)"><g transform="translate(0.75,0.25)">
<rect x="-2" y="-2" width="90" height="74.5" fill="#903126"/>
<g fill="#b8a8a0" style="filter:blur(0.35px)">
<rect x="-2" y="-0.30" width="90" height="1.6"/>
<rect x="-2" y="9.67" width="90" height="1.6"/>
<rect x="-2" y="19.64" width="90" height="1.6"/>
<rect x="-2" y="29.61" width="90" height="1.6"/>
<rect x="-2" y="39.58" width="90" height="1.6"/>
<rect x="-2" y="49.55" width="90" height="1.6"/>
<rect x="-2" y="59.52" width="90" height="1.6"/>
<rect x="-2" y="69.49" width="90" height="1.6"/>
<rect x="-1.00" y="0.50" width="1.6" height="9.97"/>
<rect x="26.40" y="0.50" width="1.6" height="9.97"/>
<rect x="53.80" y="0.50" width="1.6" height="9.97"/>
<rect x="81.20" y="0.50" width="1.6" height="9.97"/>
<rect x="16.70" y="10.47" width="1.6" height="9.97"/>
<rect x="44.10" y="10.47" width="1.6" height="9.97"/>
<rect x="71.50" y="10.47" width="1.6" height="9.97"/>
<rect x="9.10" y="20.44" width="1.6" height="9.97"/>
<rect x="36.50" y="20.44" width="1.6" height="9.97"/>
<rect x="63.90" y="20.44" width="1.6" height="9.97"/>
<rect x="-1.00" y="30.41" width="1.6" height="9.97"/>
<rect x="26.40" y="30.41" width="1.6" height="9.97"/>
<rect x="53.80" y="30.41" width="1.6" height="9.97"/>
<rect x="81.20" y="30.41" width="1.6" height="9.97"/>
<rect x="16.70" y="40.38" width="1.6" height="9.97"/>
<rect x="44.10" y="40.38" width="1.6" height="9.97"/>
<rect x="71.50" y="40.38" width="1.6" height="9.97"/>
<rect x="9.10" y="50.35" width="1.6" height="9.97"/>
<rect x="36.50" y="50.35" width="1.6" height="9.97"/>
<rect x="63.90" y="50.35" width="1.6" height="9.97"/>
<rect x="-1.00" y="60.32" width="1.6" height="9.97"/>
<rect x="26.40" y="60.32" width="1.6" height="9.97"/>
<rect x="53.80" y="60.32" width="1.6" height="9.97"/>
<rect x="81.20" y="60.32" width="1.6" height="9.97"/>
</g></g></g></svg>
<div class="lbl" style="left:378px;top:241.73px">SMOOTH BRICK 60</div>
<svg class="tile" style="left:518.40px;top:168px" width="88" height="72" viewBox="0 0 88 72">
<clipPath id="c7"><rect x="0.75" y="0.25" width="86" height="70.5"/></clipPath>
<g clip-path="url(#c7)"><g transform="translate(0.75,0.25)">
<rect x="-2" y="-2" width="90" height="74.5" fill="#8b3025"/>
<g fill="#54281c" style="filter:blur(0.35px)">
<rect x="-2" y="-0.35" width="90" height="1.7"/>
<rect x="-2" y="9.62" width="90" height="1.7"/>
<rect x="-2" y="19.59" width="90" height="1.7"/>
<rect x="-2" y="29.56" width="90" height="1.7"/>
<rect x="-2" y="39.53" width="90" height="1.7"/>
<rect x="-2" y="49.50" width="90" height="1.7"/>
<rect x="-2" y="59.47" width="90" height="1.7"/>
<rect x="-2" y="69.44" width="90" height="1.7"/>
<rect x="-0.85" y="0.50" width="1.7" height="9.97"/>
<rect x="26.55" y="0.50" width="1.7" height="9.97"/>
<rect x="53.95" y="0.50" width="1.7" height="9.97"/>
<rect x="81.35" y="0.50" width="1.7" height="9.97"/>
<rect x="19.05" y="10.47" width="1.7" height="9.97"/>
<rect x="46.45" y="10.47" width="1.7" height="9.97"/>
<rect x="73.85" y="10.47" width="1.7" height="9.97"/>
<rect x="9.45" y="20.44" width="1.7" height="9.97"/>
<rect x="36.85" y="20.44" width="1.7" height="9.97"/>
<rect x="64.25" y="20.44" width="1.7" height="9.97"/>
<rect x="-0.85" y="30.41" width="1.7" height="9.97"/>
<rect x="26.55" y="30.41" width="1.7" height="9.97"/>
<rect x="53.95" y="30.41" width="1.7" height="9.97"/>
<rect x="81.35" y="30.41" width="1.7" height="9.97"/>
<rect x="19.05" y="40.38" width="1.7" height="9.97"/>
<rect x="46.45" y="40.38" width="1.7" height="9.97"/>
<rect x="73.85" y="40.38" width="1.7" height="9.97"/>
<rect x="9.45" y="50.35" width="1.7" height="9.97"/>
<rect x="36.85" y="50.35" width="1.7" height="9.97"/>
<rect x="64.25" y="50.35" width="1.7" height="9.97"/>
<rect x="-0.85" y="60.32" width="1.7" height="9.97"/>
<rect x="26.55" y="60.32" width="1.7" height="9.97"/>
<rect x="53.95" y="60.32" width="1.7" height="9.97"/>
<rect x="81.35" y="60.32" width="1.7" height="9.97"/>
</g></g></g></svg>
<div class="lbl" style="left:491px;top:241.73px">SMOOTH BRICK 61</div>
<svg class="tile" style="left:179.40px;top:266px" width="88" height="72" viewBox="0 0 88 72">
<clipPath id="c8"><rect x="0.75" y="0.25" width="86" height="70.5"/></clipPath>
<g clip-path="url(#c8)"><g transform="translate(0.75,0.25)">
<rect x="-2" y="-2" width="90" height="74.5" fill="#8a3328"/>
<g fill="#84605c" style="filter:blur(0.35px)">
<rect x="-2" y="-0.20" width="90" height="1.4"/>
<rect x="-2" y="9.77" width="90" height="1.4"/>
<rect x="-2" y="19.74" width="90" height="1.4"/>
<rect x="-2" y="29.71" width="90" height="1.4"/>
<rect x="-2" y="39.68" width="90" height="1.4"/>
<rect x="-2" y="49.65" width="90" height="1.4"/>
<rect x="-2" y="59.62" width="90" height="1.4"/>
<rect x="-2" y="69.59" width="90" height="1.4"/>
<rect x="-1.30" y="0.50" width="1.4" height="9.97"/>
<rect x="26.10" y="0.50" width="1.4" height="9.97"/>
<rect x="53.50" y="0.50" width="1.4" height="9.97"/>
<rect x="80.90" y="0.50" width="1.4" height="9.97"/>
<rect x="16.20" y="10.47" width="1.4" height="9.97"/>
<rect x="43.60" y="10.47" width="1.4" height="9.97"/>
<rect x="71.00" y="10.47" width="1.4" height="9.97"/>
<rect x="6.30" y="20.44" width="1.4" height="9.97"/>
<rect x="33.70" y="20.44" width="1.4" height="9.97"/>
<rect x="61.10" y="20.44" width="1.4" height="9.97"/>
<rect x="-1.30" y="30.41" width="1.4" height="9.97"/>
<rect x="26.10" y="30.41" width="1.4" height="9.97"/>
<rect x="53.50" y="30.41" width="1.4" height="9.97"/>
<rect x="80.90" y="30.41" width="1.4" height="9.97"/>
<rect x="16.20" y="40.38" width="1.4" height="9.97"/>
<rect x="43.60" y="40.38" width="1.4" height="9.97"/>
<rect x="71.00" y="40.38" width="1.4" height="9.97"/>
<rect x="6.30" y="50.35" width="1.4" height="9.97"/>
<rect x="33.70" y="50.35" width="1.4" height="9.97"/>
<rect x="61.10" y="50.35" width="1.4" height="9.97"/>
<rect x="-1.30" y="60.32" width="1.4" height="9.97"/>
<rect x="26.10" y="60.32" width="1.4" height="9.97"/>
<rect x="53.50" y="60.32" width="1.4" height="9.97"/>
<rect x="80.90" y="60.32" width="1.4" height="9.97"/>
</g></g></g></svg>
<div class="lbl" style="left:152px;top:339.73px">SMOOTH BRICK 62</div>
<svg class="tile" style="left:292.40px;top:266px" width="88" height="72" viewBox="0 0 88 72">
<clipPath id="c9"><rect x="0.75" y="0.25" width="86" height="70.5"/></clipPath>
<g clip-path="url(#c9)"><g transform="translate(0.75,0.25)">
<rect x="-2" y="-2" width="90" height="74.5" fill="#873324"/>
<g fill="#582b1f" style="filter:blur(0.35px)">
<rect x="-2" y="-0.30" width="90" height="1.6"/>
<rect x="-2" y="9.67" width="90" height="1.6"/>
<rect x="-2" y="19.64" width="90" height="1.6"/>
<rect x="-2" y="29.61" width="90" height="1.6"/>
<rect x="-2" y="39.58" width="90" height="1.6"/>
<rect x="-2" y="49.55" width="90" height="1.6"/>
<rect x="-2" y="59.52" width="90" height="1.6"/>
<rect x="-2" y="69.49" width="90" height="1.6"/>
<rect x="-0.70" y="0.50" width="1.6" height="9.97"/>
<rect x="26.60" y="0.50" width="1.6" height="9.97"/>
<rect x="53.90" y="0.50" width="1.6" height="9.97"/>
<rect x="81.20" y="0.50" width="1.6" height="9.97"/>
<rect x="16.70" y="10.47" width="1.6" height="9.97"/>
<rect x="44.00" y="10.47" width="1.6" height="9.97"/>
<rect x="71.30" y="10.47" width="1.6" height="9.97"/>
<rect x="6.80" y="20.44" width="1.6" height="9.97"/>
<rect x="34.10" y="20.44" width="1.6" height="9.97"/>
<rect x="61.40" y="20.44" width="1.6" height="9.97"/>
<rect x="-0.70" y="30.41" width="1.6" height="9.97"/>
<rect x="26.60" y="30.41" width="1.6" height="9.97"/>
<rect x="53.90" y="30.41" width="1.6" height="9.97"/>
<rect x="81.20" y="30.41" width="1.6" height="9.97"/>
<rect x="16.70" y="40.38" width="1.6" height="9.97"/>
<rect x="44.00" y="40.38" width="1.6" height="9.97"/>
<rect x="71.30" y="40.38" width="1.6" height="9.97"/>
<rect x="6.80" y="50.35" width="1.6" height="9.97"/>
<rect x="34.10" y="50.35" width="1.6" height="9.97"/>
<rect x="61.40" y="50.35" width="1.6" height="9.97"/>
<rect x="-0.70" y="60.32" width="1.6" height="9.97"/>
<rect x="26.60" y="60.32" width="1.6" height="9.97"/>
<rect x="53.90" y="60.32" width="1.6" height="9.97"/>
<rect x="81.20" y="60.32" width="1.6" height="9.97"/>
</g></g></g></svg>
<div class="lbl" style="left:265px;top:339.73px">SMOOTH BRICK 63</div>
<svg class="tile" style="left:405.40px;top:266px" width="88" height="72" viewBox="0 0 88 72">
<clipPath id="c10"><rect x="0.75" y="0.25" width="86" height="70.5"/></clipPath>
<g clip-path="url(#c10)"><g transform="translate(0.75,0.25)">
<rect x="-2" y="-2" width="90" height="74.5" fill="#6e2e2c"/>
<g fill="#866a6a" style="filter:blur(0.35px)">
<rect x="-2" y="-0.20" width="90" height="1.4"/>
<rect x="-2" y="9.77" width="90" height="1.4"/>
<rect x="-2" y="19.74" width="90" height="1.4"/>
<rect x="-2" y="29.71" width="90" height="1.4"/>
<rect x="-2" y="39.68" width="90" height="1.4"/>
<rect x="-2" y="49.65" width="90" height="1.4"/>
<rect x="-2" y="59.62" width="90" height="1.4"/>
<rect x="-2" y="69.59" width="90" height="1.4"/>
<rect x="-0.30" y="0.50" width="1.4" height="9.97"/>
<rect x="27.10" y="0.50" width="1.4" height="9.97"/>
<rect x="54.50" y="0.50" width="1.4" height="9.97"/>
<rect x="81.90" y="0.50" width="1.4" height="9.97"/>
<rect x="17.20" y="10.47" width="1.4" height="9.97"/>
<rect x="44.60" y="10.47" width="1.4" height="9.97"/>
<rect x="72.00" y="10.47" width="1.4" height="9.97"/>
<rect x="6.90" y="20.44" width="1.4" height="9.97"/>
<rect x="34.30" y="20.44" width="1.4" height="9.97"/>
<rect x="61.70" y="20.44" width="1.4" height="9.97"/>
<rect x="-0.30" y="30.41" width="1.4" height="9.97"/>
<rect x="27.10" y="30.41" width="1.4" height="9.97"/>
<rect x="54.50" y="30.41" width="1.4" height="9.97"/>
<rect x="81.90" y="30.41" width="1.4" height="9.97"/>
<rect x="17.20" y="40.38" width="1.4" height="9.97"/>
<rect x="44.60" y="40.38" width="1.4" height="9.97"/>
<rect x="72.00" y="40.38" width="1.4" height="9.97"/>
<rect x="6.90" y="50.35" width="1.4" height="9.97"/>
<rect x="34.30" y="50.35" width="1.4" height="9.97"/>
<rect x="61.70" y="50.35" width="1.4" height="9.97"/>
<rect x="-0.30" y="60.32" width="1.4" height="9.97"/>
<rect x="27.10" y="60.32" width="1.4" height="9.97"/>
<rect x="54.50" y="60.32" width="1.4" height="9.97"/>
<rect x="81.90" y="60.32" width="1.4" height="9.97"/>
</g></g></g></svg>
<div class="lbl" style="left:378px;top:339.73px">SMOOTH BRICK 64</div>
<svg class="tile" style="left:518.40px;top:266px" width="88" height="72" viewBox="0 0 88 72">
<clipPath id="c11"><rect x="0.75" y="0.25" width="86" height="70.5"/></clipPath>
<g clip-path="url(#c11)"><g transform="translate(0.75,0.25)">
<rect x="-2" y="-2" width="90" height="74.5" fill="#632f2a"/>
<g fill="#4a291f" style="filter:blur(0.5px)">
<rect x="-2" y="-0.20" width="90" height="1.4"/>
<rect x="-2" y="9.77" width="90" height="1.4"/>
<rect x="-2" y="19.74" width="90" height="1.4"/>
<rect x="-2" y="29.71" width="90" height="1.4"/>
<rect x="-2" y="39.68" width="90" height="1.4"/>
<rect x="-2" y="49.65" width="90" height="1.4"/>
<rect x="-2" y="59.62" width="90" height="1.4"/>
<rect x="-2" y="69.59" width="90" height="1.4"/>
<rect x="-1.10" y="0.50" width="1.4" height="9.97"/>
<rect x="26.10" y="0.50" width="1.4" height="9.97"/>
<rect x="53.30" y="0.50" width="1.4" height="9.97"/>
<rect x="80.50" y="0.50" width="1.4" height="9.97"/>
<rect x="16.20" y="10.47" width="1.4" height="9.97"/>
<rect x="43.40" y="10.47" width="1.4" height="9.97"/>
<rect x="70.60" y="10.47" width="1.4" height="9.97"/>
<rect x="6.30" y="20.44" width="1.4" height="9.97"/>
<rect x="33.50" y="20.44" width="1.4" height="9.97"/>
<rect x="60.70" y="20.44" width="1.4" height="9.97"/>
<rect x="-1.10" y="30.41" width="1.4" height="9.97"/>
<rect x="26.10" y="30.41" width="1.4" height="9.97"/>
<rect x="53.30" y="30.41" width="1.4" height="9.97"/>
<rect x="80.50" y="30.41" width="1.4" height="9.97"/>
<rect x="16.20" y="40.38" width="1.4" height="9.97"/>
<rect x="43.40" y="40.38" width="1.4" height="9.97"/>
<rect x="70.60" y="40.38" width="1.4" height="9.97"/>
<rect x="6.30" y="50.35" width="1.4" height="9.97"/>
<rect x="33.50" y="50.35" width="1.4" height="9.97"/>
<rect x="60.70" y="50.35" width="1.4" height="9.97"/>
<rect x="-1.10" y="60.32" width="1.4" height="9.97"/>
<rect x="26.10" y="60.32" width="1.4" height="9.97"/>
<rect x="53.30" y="60.32" width="1.4" height="9.97"/>
<rect x="80.50" y="60.32" width="1.4" height="9.97"/>
</g></g></g></svg>
<div class="lbl" style="left:491px;top:339.73px">SMOOTH BRICK 65</div>
<svg class="tile" style="left:179.5px;top:363.7px" width="86" height="70" viewBox="0 0 86 70">
<rect width="86" height="70" fill="#ccd3d6"/>
<rect x="0.00" y="0.00" width="32.40" height="8.3" fill="#c9654a"/>
<rect x="34.50" y="0.00" width="32.40" height="8.3" fill="#c9654a"/>
<rect x="69.00" y="0.00" width="17.00" height="8.3" fill="#c9654a"/>
<rect x="0.00" y="10.10" width="15.10" height="8.3" fill="#c9654a"/>
<rect x="17.20" y="10.10" width="32.40" height="8.3" fill="#c9654a"/>
<rect x="51.70" y="10.10" width="32.40" height="8.3" fill="#c9654a"/>
<rect x="0.00" y="20.20" width="32.40" height="8.3" fill="#c9654a"/>
<rect x="34.50" y="20.20" width="32.40" height="8.3" fill="#c9654a"/>
<rect x="69.00" y="20.20" width="17.00" height="8.3" fill="#c9654a"/>
<rect x="0.00" y="30.30" width="15.10" height="8.3" fill="#c9654a"/>
<rect x="17.20" y="30.30" width="32.40" height="8.3" fill="#c9654a"/>
<rect x="51.70" y="30.30" width="32.40" height="8.3" fill="#c9654a"/>
<rect x="0.00" y="40.40" width="32.40" height="8.3" fill="#c9654a"/>
<rect x="34.50" y="40.40" width="32.40" height="8.3" fill="#c9654a"/>
<rect x="69.00" y="40.40" width="17.00" height="8.3" fill="#c9654a"/>
<rect x="0.00" y="50.50" width="15.10" height="8.3" fill="#c9654a"/>
<rect x="17.20" y="50.50" width="32.40" height="8.3" fill="#c9654a"/>
<rect x="51.70" y="50.50" width="32.40" height="8.3" fill="#c9654a"/>
<rect x="0.00" y="60.60" width="32.40" height="8.3" fill="#c9654a"/>
<rect x="34.50" y="60.60" width="32.40" height="8.3" fill="#c9654a"/>
<rect x="69.00" y="60.60" width="17.00" height="8.3" fill="#c9654a"/>
</svg>
<div class="lbl" style="transform:matrix(.828,0.001,0,1,0,0);-webkit-text-stroke:.1px #000;left:152.0px;top:437.73px">SMOOTH BRICK, parametric</div>
<div style="left:626px;top:21.5px;width:9.3px;height:424px;background:#f0f0f0"></div>
<div style="left:626px;top:312px;width:9.3px;height:123px;background:#cdcdcd"></div>
<svg style="left:627.6px;top:25.5px" width="6" height="4.5" viewBox="0 0 6 4.5"><path d="M0.6 3.8 L3 1.2 L5.4 3.8" fill="none" stroke="#404040" stroke-width="1.2"/></svg>
<svg style="left:627.6px;top:438.6px" width="6" height="4.5" viewBox="0 0 6 4.5"><path d="M0.6 0.8 L3 3.4 L5.4 0.8" fill="none" stroke="#404040" stroke-width="1.2"/></svg>
<div style="left:292.5px;top:381px;width:81.5px;height:47.5px;background:#f1f1f1;border:1px solid #bcbcbc;box-shadow:1.6px 1.6px 1.6px rgba(0,0,0,.45)"></div>
<svg style="left:296.3px;top:385.6px" width="9.5" height="8.5" viewBox="0 0 9.5 8.5"><path d="M1.1 7.6 L4.3 4.7" stroke="#1f3f9c" stroke-width="1.5" stroke-linecap="round"/><circle cx="6.2" cy="3" r="2.3" fill="#dce9f4" stroke="#2c86de" stroke-width="1.2"/></svg>
<span class="t" style="left:309px;top:386px;font-size:8.3px;transform:matrix(0.891,0.001,0,1,0.80,0.02);color:#111;">Etsi (Ctrl+F)</span>
<div style="left:295.5px;top:397.8px;width:75.5px;height:1px;background:#c4c4c4"></div>
<svg style="left:296px;top:402.6px" width="11" height="10.5" viewBox="0 0 11 10.5"><path d="M0.9 4 H7.9 V8.6 Q7.9 9.9 6.6 9.9 H2.2 Q0.9 9.9 0.9 8.6 Z" fill="#e4e4e4" stroke="#333" stroke-width="1.1"/><path d="M0.9 5.8 H7.9 M3 5.8 V9.8 M5.6 5.8 V9.8" stroke="#333" stroke-width="0.8"/><path d="M3.6 3.8 Q3.8 1.6 6.4 1.2 L8.6 1.2" fill="none" stroke="#444" stroke-width="0.9"/><path d="M8.4 0.9 H10.4 V5 Z" fill="#2a78d8"/></svg>
<span class="t" style="left:309px;top:403px;font-size:8.3px;transform:matrix(0.897,0.001,0,1,0.80,0.62);color:#111;">Näkymä</span>
<svg style="left:364.5px;top:405.6px" width="3.4" height="5" viewBox="0 0 3.4 5"><path d="M0.3 0.2 L3 2.5 L0.3 4.8 Z" fill="#111"/></svg>
<div style="left:307px;top:415.8px;width:65px;height:9.4px;background:#0078d7"></div>
<span class="t" style="left:309px;top:416px;font-size:8.3px;transform:matrix(0.857,0.001,0,1,0.80,0.02);color:#fff;">Käytä</span>
</body></html>
